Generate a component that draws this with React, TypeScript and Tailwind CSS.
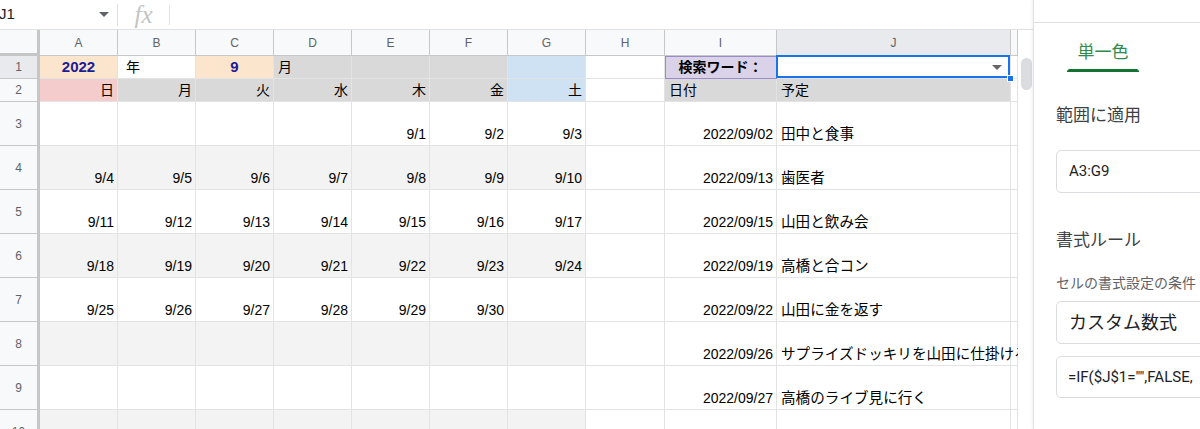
import React from "react";

type Cell = { t?: string; cls?: string };

const sheetFont = { fontFamily: '"Liberation Sans", Arial, "Noto Sans CJK JP", sans-serif' };
const uiFont = { fontFamily: 'Roboto, "Noto Sans CJK JP", sans-serif' };

const colLetters = ["A", "B", "C", "D", "E", "F", "G", "H", "I", "J", ""];

const R = "justify-end pr-[3px]";
const L = "justify-start pl-[4px]";

const calendar: (string | undefined)[][] = [
  [undefined, undefined, undefined, undefined, "9/1", "9/2", "9/3"],
  ["9/4", "9/5", "9/6", "9/7", "9/8", "9/9", "9/10"],
  ["9/11", "9/12", "9/13", "9/14", "9/15", "9/16", "9/17"],
  ["9/18", "9/19", "9/20", "9/21", "9/22", "9/23", "9/24"],
  ["9/25", "9/26", "9/27", "9/28", "9/29", "9/30", undefined],
  [],
  [],
  [],
];

const events: [string, string][] = [
  ["2022/09/02", "田中と食事"],
  ["2022/09/13", "歯医者"],
  ["2022/09/15", "山田と飲み会"],
  ["2022/09/19", "高橋と合コン"],
  ["2022/09/22", "山田に金を返す"],
  ["2022/09/26", "サプライズドッキリを山田に仕掛ける"],
  ["2022/09/27", "高橋のライブ見に行く"],
  ["", ""],
];

function Triangle({ className }: { className?: string }) {
  return (
    <svg width="10" height="5" viewBox="0 0 10 5" className={className}>
      <path d="M0 0h10L5 5z" fill="currentColor" />
    </svg>
  );
}

function FormulaBar() {
  return (
    <div className="flex h-[30px] shrink-0 items-center border-b border-[#e0e0e0] bg-white" style={sheetFont}>
      <div className="flex w-[117px] items-center justify-between pr-[8px]">
        <span className="-ml-[1px] text-[15px] text-[#202124]">J1</span>
        <Triangle className="text-[#5f6368]" />
      </div>
      <div className="h-[22px] w-px bg-[#e0e0e0]" />
      <div className="flex w-[51px] justify-center">
        <span className="text-[25px] italic leading-none text-[#c4c4c4]" style={{ fontFamily: '"Liberation Serif", serif' }}>
          fx
        </span>
      </div>
      <div className="h-[20px] w-px bg-[#e0e0e0]" />
    </div>
  );
}

function Sheet() {
  const rowHeaders: { n: string; h: string; sel?: boolean }[] = [
    { n: "1", h: "h-[23px]", sel: true },
    { n: "2", h: "h-[23px]" },
    ...["3", "4", "5", "6", "7", "8", "9", "10"].map((n) => ({ n, h: "h-[44px]" })),
  ];

  const navy = "bg-[#fce5cd] justify-center font-bold text-[#1c1c96] text-[15px]";

  const rows: Cell[][] = [];
  // row 1
  rows.push([
    { t: "2022", cls: navy },
    { t: "年", cls: "justify-start pl-[8px]" },
    { t: "9", cls: navy },
    { t: "月", cls: "bg-[#d9d9d9] " + L },
    { cls: "bg-[#d9d9d9]" },
    { cls: "bg-[#d9d9d9]" },
    { cls: "bg-[#cfe2f3]" },
    {},
    { t: "検索ワード：", cls: "bg-[#d9d2e9] justify-center font-bold outline outline-1 -outline-offset-1 outline-[#9a8cc9]" },
    { t: "", cls: "j1" },
    {},
  ]);
  // row 2
  rows.push([
    { t: "日", cls: "bg-[#f4cccc] " + R },
    { t: "月", cls: "bg-[#d9d9d9] " + R },
    { t: "火", cls: "bg-[#d9d9d9] " + R },
    { t: "水", cls: "bg-[#d9d9d9] " + R },
    { t: "木", cls: "bg-[#d9d9d9] " + R },
    { t: "金", cls: "bg-[#d9d9d9] " + R },
    { t: "土", cls: "bg-[#cfe2f3] " + R },
    {},
    { t: "日付", cls: "bg-[#d9d9d9] " + L },
    { t: "予定", cls: "bg-[#d9d9d9] " + L },
    {},
  ]);
  calendar.forEach((week, i) => {
    const band = i % 2 === 1 ? "bg-[#f3f3f3] " : "";
    const cells: Cell[] = [];
    for (let c = 0; c < 7; c++) cells.push({ t: week[c], cls: band + "items-end pb-[3px] " + R });
    cells.push({});
    cells.push({ t: events[i][0], cls: "items-end pb-[3px] " + R });
    cells.push({ t: events[i][1], cls: "items-end pb-[3px] overflow-visible z-10 text-[14.6px] " + L });
    cells.push({});
    rows.push(cells);
  });

  return (
    <div className="w-[1018px] shrink-0 overflow-hidden" style={sheetFont}>
      <div className="grid grid-cols-[40px_repeat(7,78px)_79px_112px_234px_7px]">
        {/* column headers */}
        <div className="h-[26px] border-r-[3px] border-b-[3px] border-[#c4c7c5] bg-[#f8f9fa]" />
        {colLetters.map((l, i) => (
          <div
            key={"h" + i}
            className={
              "flex h-[26px] items-center justify-center border-r border-b border-[#c7c7c7] text-[12px] text-[#5f6368] " +
              (l === "J" ? "bg-[#e8eaed]" : "bg-[#f8f9fa]")
            }
          >
            {l}
          </div>
        ))}

        {rows.map((cells, r) => (
          <React.Fragment key={"r" + r}>
            <div
              className={
                "flex items-center justify-center border-r-[3px] border-b border-r-[#c4c7c5] border-b-[#c7c7c7] text-[12px] text-[#5f6368] " +
                rowHeaders[r].h +
                (rowHeaders[r].sel ? " bg-[#e8eaed]" : " bg-[#f8f9fa]")
              }
            >
              {rowHeaders[r].n}
            </div>
            {cells.map((c, ci) => {
              if (c.cls === "j1") {
                return (
                  <div
                    key={ci}
                    className={"relative flex items-center justify-end border-r border-b border-[#e2e3e3] pr-[8px] " + rowHeaders[r].h}
                  >
                    <Triangle className="text-[#666]" />
                    <div className="pointer-events-none absolute -left-[1px] -top-[1px] right-0 bottom-0 border-2 border-[#1a73e8]" />
                    <div className="absolute -bottom-[4px] -right-[4px] h-[7px] w-[7px] border border-white bg-[#1a73e8]" />
                  </div>
                );
              }
              const cls = c.cls ?? "";
              const color = cls.includes("text-[#") ? "" : "text-black ";
              const size = /text-\[\d/.test(cls) ? "" : "text-[14px] ";
              const align = cls.includes("items-end") ? "" : "items-center ";
              return (
                <div
                  key={ci}
                  className={
                    "flex whitespace-nowrap border-r border-b border-[#e2e3e3] leading-[16px] " +
                    color +
                    size +
                    align +
                    rowHeaders[r].h +
                    " " +
                    cls
                  }
                >
                  {c.t}
                </div>
              );
            })}
          </React.Fragment>
        ))}
        {/* row 10 */}
        <div className="flex h-[44px] items-center justify-center border-r-[3px] border-r-[#c4c7c5] bg-[#f8f9fa] text-[12px] text-[#5f6368]">
          10
        </div>
        {colLetters.map((_, i) => (
          <div key={"z" + i} className={"h-[44px] border-r border-[#e2e3e3] " + (i < 7 ? "bg-[#f3f3f3]" : "")} />
        ))}
      </div>
    </div>
  );
}

function Scrollbar() {
  return (
    <div className="w-[15px] shrink-0 bg-white pl-[3px] pt-[28px]">
      <div className="h-[32px] w-[11px] rounded-full bg-[#dadce0]" />
    </div>
  );
}

function Panel() {
  return (
    <div
      className="h-[429px] w-[167px] shrink-0 overflow-hidden border-l border-[#e0e0e0] bg-white shadow-[-1px_0_3px_rgba(0,0,0,0.06)]"
      style={uiFont}
    >
      <div className="h-[23px] border-b border-[#e0e0e0]" />
      <div className="ml-[33px] w-[72px]">
        <div className="pt-[17px] pb-[5px] text-center text-[17px] leading-[24px] text-[#2e8b4a]">単一色</div>
        <div className="h-[3px] rounded-t-[3px] bg-[#137333]" />
      </div>
      <div className="pl-[22px]">
        <div className="mt-[31px] whitespace-nowrap text-[17px] leading-[24px] text-[#3c4043]">範囲に適用</div>
        <div className="mt-[23px] flex h-[43px] w-[190px] items-center rounded-[5px] border border-[#dadce0] pl-[12px] text-[15px] text-[#202124]">
          A3:G9
        </div>
        <div className="mt-[35px] whitespace-nowrap text-[17px] leading-[24px] text-[#3c4043]">書式ルール</div>
        <div className="mt-[21px] whitespace-nowrap text-[14px] leading-[20px] text-[#5f6368]">セルの書式設定の条件</div>
        <div className="mt-[8px] flex h-[43px] w-[190px] items-center rounded-[5px] border border-[#dadce0] pl-[12px] text-[18px] text-[#202124]">
          カスタム数式
        </div>
        <div className="mt-[12px] flex h-[42px] w-[190px] items-center whitespace-nowrap rounded-[5px] border border-[#dadce0] pl-[11px] text-[15px] text-[#202124]">
          =IF($J$1="",FALSE,
        </div>
      </div>
    </div>
  );
}

export default function App() {
  return (
    <div className="flex h-[429px] w-[1200px] overflow-hidden bg-white">
      <div className="flex w-[1033px] shrink-0 flex-col overflow-hidden">
        <FormulaBar />
        <div className="flex shrink-0">
          <Sheet />
          <Scrollbar />
        </div>
      </div>
      <Panel />
    </div>
  );
}
